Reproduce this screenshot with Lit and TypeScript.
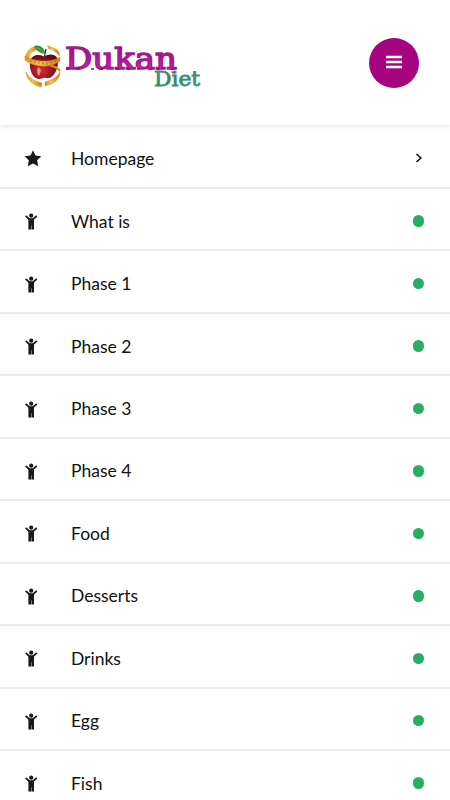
import { LitElement, html, css, svg } from "lit";
import { customElement } from "lit/decorators.js";

const ITEMS = ["Homepage", "What is", "Phase 1", "Phase 2", "Phase 3", "Phase 4", "Food", "Desserts", "Drinks", "Egg", "Fish"];

@customElement("diet-logo")
class DietLogo extends LitElement {
  static styles = css`
    :host { display: block; width: 180px; height: 50px; }
    svg { display: block; }
    .name { font: 29.5px "DejaVu Serif", serif; }
    .sub { font: 20px "DejaVu Serif", serif; }
  `;
  render() {
    return html`<svg width="180" height="50" viewBox="24 41 180 50">
      <defs>
        <linearGradient id="purple" x1="0" y1="0" x2="0" y2="1">
          <stop offset="0.2" stop-color="#901482" />
          <stop offset="0.5" stop-color="#b0188f" />
          <stop offset="0.72" stop-color="#c62cab" />
        </linearGradient>
        <linearGradient id="teal" x1="0" y1="0" x2="1" y2="1">
          <stop offset="0" stop-color="#4ca68a" />
          <stop offset="0.5" stop-color="#2b806a" />
          <stop offset="1" stop-color="#5cb898" />
        </linearGradient>
        <radialGradient id="apple" cx="0.4" cy="0.65" r="0.65">
          <stop offset="0" stop-color="#d8302c" />
          <stop offset="0.5" stop-color="#a01820" />
          <stop offset="1" stop-color="#5c0c14" />
        </radialGradient>
        <linearGradient id="tape" x1="0" y1="0" x2="1" y2="0">
          <stop offset="0" stop-color="#e58b22" />
          <stop offset="0.4" stop-color="#f3c24d" />
          <stop offset="1" stop-color="#d97418" />
        </linearGradient>
      </defs>
      <path d="M34 46.500C29 48 26 52 25.500 57L29 59C30 54 32 51 37 50Z" fill="url(#tape)" />
      <path d="M47 45.500C55 47 60 50 60 56L55.500 52.500C53 50 51 49.500 49 49.500Z" fill="url(#tape)" />
      <path d="M44 56.500C38 53.500 31 55 30 62C29 70 33 79 39 79C42 79 43 77 46 78C52 80 57 72 58 63C59 54 50 52.500 44 56.500Z" fill="url(#apple)" />
      <path d="M44.500 57Q45 53 46 49" fill="none" stroke="#4c2618" stroke-width="1.3" />
      <path d="M45 54C39 53 36 50 34 46C40 44 45 48 45 54Z" fill="#398b35" />
      <path d="M37 47.500Q41 49 44 53" fill="none" stroke="#84be4c" stroke-width="0.7" />
      <path d="M38 67L41 70L39 76Q36 73 38 67Z" fill="#ffb09a" opacity="0.8" />
      <path d="M25 56C33 61 49 64 60 57L60 61C50 69 33 67 25 60Z" fill="url(#tape)" stroke="#d98122" stroke-width="0.5" />
      <path d="M31 59.500v2.500M35 60.500v2.500M39 61.500v2.500M43 62v2.500M47 62v2.500M51 61v2.500M55 60v2.500" stroke="#9b5517" stroke-width="0.7" />
      <path d="M52 65Q58 66 60.500 70L60 72Q55 67 49 66.500Z" fill="#df8828" />
      <path d="M26 72C29 78 34 81 42 83L41 87C33 85 27 80 26 72Z" fill="url(#tape)" stroke="#d98122" stroke-width="0.5" />
      <path d="M45 82C53 80 58 76 60 72C60 79 54 84 45 86Z" fill="url(#tape)" stroke="#d98122" stroke-width="0.5" />
      <text class="name" x="65" y="68.500" textLength="112" lengthAdjust="spacingAndGlyphs" fill="url(#purple)" stroke="#a81890" stroke-width="1.5">Dukan</text>
      <path d="M66 69h3M76 69h4M91 69h3M99 69h4M116 69h3M127 69h3M137 69h3M149 69h3M157 69h3M171 69h4" stroke="#86107a" stroke-width="1.5" />
      <text class="sub" x="154" y="86" textLength="46" lengthAdjust="spacingAndGlyphs" fill="url(#teal)" stroke="#3c8d76" stroke-width="0.8">Diet</text>
      <path d="M171 71.500h4l-2 2.500z" fill="#d32236" />
    </svg>`;
  }
}

const star = svg`<path d="M9 0.200L11.500 5.500L17.300 6.300L13.100 10.300L14.200 16.200L9 13.400L3.800 16.200L4.900 10.300L0.700 6.300L6.500 5.500Z" />`;
const person = svg`<circle cx="7.200" cy="2.700" r="2.100" /><path d="M2.200 3.400L5.500 6.400H8.900L12.200 3.400" fill="none" stroke="#18181c" stroke-width="1.900" stroke-linecap="round" /><path d="M4.400 5.600H10V16.500H7.400V12.300H7V16.500H4.400Z" />`;

@customElement("app-root")
class AppRoot extends LitElement {
  static styles = css`
    :host { display: block; height: 800px; overflow: hidden; background: #fff; color: #111; font-family: Lato, sans-serif; }
    header { height: 125px; box-sizing: border-box; display: flex; align-items: center; justify-content: space-between; padding: 0 31px 0 24px; box-shadow: 0 1px 5px rgba(0, 0, 0, 0.13); }
    diet-logo { margin-top: 7px; }
    button { width: 50px; height: 50px; border: 0; border-radius: 50%; padding: 0 0 2px; box-sizing: border-box; background: #a6047f; display: grid; place-items: center; }
    button svg, .icon svg, .mark svg { display: block; }
    .row { height: 62.45px; box-sizing: border-box; display: flex; align-items: center; padding: 3px 25px 0 24px; background: linear-gradient(#ebebeb, #ebebeb) bottom / 100% 2px no-repeat; }
    .row:first-child { height: 64px; }
    .icon { width: 47px; }
    .icon svg { fill: #18181c; overflow: visible; }
    .label { flex: 1; font-size: 17.5px; line-height: 24px; }
    .mark { width: 13px; display: grid; place-items: center; padding-bottom: 1px; }
    .dot { width: 11.5px; height: 11.5px; border-radius: 50%; background: #27ae60; }
  `;
  render() {
    return html`<header>
        <diet-logo></diet-logo>
        <button aria-label="Menu"><svg width="16" height="14"><path d="M0 2H16M0 7H16M0 12H16" stroke="#fff" stroke-width="2.400" /></svg></button>
      </header>
      <nav>
        ${ITEMS.map((label, i) => html`<div class="row">
          <span class="icon"><svg width="18" height="17">${i === 0 ? star : person}</svg></span>
          <span class="label">${label}</span>
          <span class="mark">${i === 0
            ? html`<svg width="8" height="10"><path d="M1.500 1L5.800 5L1.500 9" fill="none" stroke="#18181c" stroke-width="1.700" /></svg>`
            : html`<span class="dot"></span>`}</span>
        </div>`)}
      </nav>`;
  }
}
